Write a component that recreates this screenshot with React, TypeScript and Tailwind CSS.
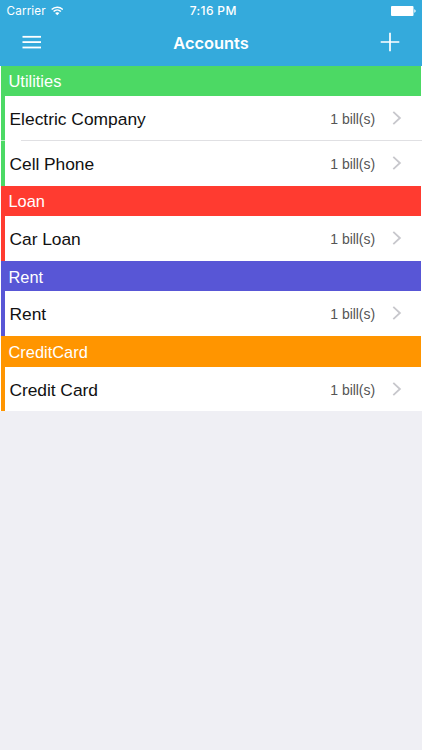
type Group = { name: string; accounts: string[]; bg: string; headerClass: string; rowClass: string };

const groups: Group[] = [
  { name: "Utilities", accounts: ["Electric Company", "Cell Phone"], bg: "bg-[#4cd964]", headerClass: "h-[30px]", rowClass: "h-[45px]" },
  { name: "Loan", accounts: ["Car Loan"], bg: "bg-[#ff3b30]", headerClass: "h-[30px]", rowClass: "h-[45px]" },
  { name: "Rent", accounts: ["Rent"], bg: "bg-[#5856d6]", headerClass: "h-[30px] pt-[2px]", rowClass: "h-[45px]" },
  { name: "CreditCard", accounts: ["Credit Card"], bg: "bg-[#ff9500]", headerClass: "h-[31px] pt-px", rowClass: "h-[44px] pt-px" },
];

function WifiIcon() {
  return (
    <svg width="12.5" height="10" viewBox="0 0 13 10" fill="none" stroke="white" strokeWidth="1.6">
      <path d="M0.7 3.5C4 0.2 9 0.2 12.3 3.5" />
      <path d="M2.7 5.6C4.9 3.4 8.1 3.4 10.3 5.6" />
      <path d="M6.5 9.3L4.3 7.1C5.5 5.9 7.5 5.9 8.7 7.1Z" fill="white" stroke="none" />
    </svg>
  );
}

function StatusBar() {
  return (
    <div className="grid h-[22px] grid-cols-3 items-center pl-[6.5px] pr-[6px]">
      <div className="flex items-center gap-[5px] font-['Inter',sans-serif] text-[11.7px] leading-[22px] tracking-[0.15px]">
        <span>Carrier</span>
        <WifiIcon />
      </div>
      <span className="pl-[4px] text-center font-['Inter',sans-serif] text-[12px] font-medium leading-[22px] tracking-[0.35px]">7:16 PM</span>
      <svg className="justify-self-end" width="25" height="10" viewBox="0 0 25 10" fill="white">
        <rect width="22.5" height="10" rx="1" />
        <path d="M23.3 3.2C25.1 3.6 25.1 6.4 23.3 6.8Z" />
      </svg>
    </div>
  );
}

function NavBar() {
  return (
    <div className="grid h-[44px] grid-cols-[1fr_auto_1fr] items-center px-[22px]">
      <svg width="20" height="14" viewBox="0 0 20 14" fill="white" className="mb-[4px]">
        <rect x="0.5" y="0.9" width="18.5" height="1.8" />
        <rect x="0.5" y="6.2" width="18.5" height="1.8" />
        <rect x="0.5" y="11.6" width="18.5" height="1.8" />
      </svg>
      <h1 className="mb-[2px] font-['Inter',sans-serif] text-[16.4px] font-semibold leading-[22px]">Accounts</h1>
      <svg width="20" height="20" viewBox="0 0 20 20" stroke="white" strokeWidth="1.7" className="mb-[4px] justify-self-end">
        <path d="M0.7 10H19.3M10 0.7V19.3" />
      </svg>
    </div>
  );
}

function AccountRow({ name, bg, rowClass, divided }: { name: string; bg: string; rowClass: string; divided: boolean }) {
  return (
    <li className="flex">
      <div className={`w-1 ${bg} ${divided ? "border-b border-[#b8efc2]" : ""}`} />
      <div className={`flex flex-1 flex-col ${rowClass} ${divided ? "pt-px" : ""}`}>
        <div className="flex flex-1 items-center pl-[4.5px] pr-[20px]">
          <span className={`flex-1 text-[17.4px] leading-5 text-[#111111] ${divided ? "pt-px" : "tracking-[-0.05px]"}`}>{name}</span>
          <span className={`mr-[17px] text-[14px] leading-5 tracking-[-0.05px] text-[#555555] ${divided ? "pt-px" : ""}`}>1 bill(s)</span>
          <svg width="10" height="14" viewBox="0 0 10 14" fill="none" stroke="#c7c7cc" strokeWidth="1.8" className="mb-px">
            <path d="M1.3 0.9L7.9 7L1.3 13.1" />
          </svg>
        </div>
        {divided && <div className="ml-[16px] h-px bg-[#e0e0e3]" />}
      </div>
    </li>
  );
}

export default function App() {
  return (
    <div className="min-h-screen bg-[#efeff4] font-['Liberation_Sans',Arial,sans-serif]">
      <header className="h-[66px] bg-[#34aadc] text-white">
        <StatusBar />
        <NavBar />
      </header>
      <main className="bg-white pl-px">
        {groups.map((group) => (
          <section key={group.name}>
            <h2 className={`mr-px flex items-center pl-[7.5px] text-[16.4px] text-white ${group.headerClass} ${group.bg}`}>{group.name}</h2>
            <ul>
              {group.accounts.map((name, i) => (
                <AccountRow key={name} name={name} bg={group.bg} rowClass={group.rowClass} divided={i < group.accounts.length - 1} />
              ))}
            </ul>
          </section>
        ))}
      </main>
    </div>
  );
}
